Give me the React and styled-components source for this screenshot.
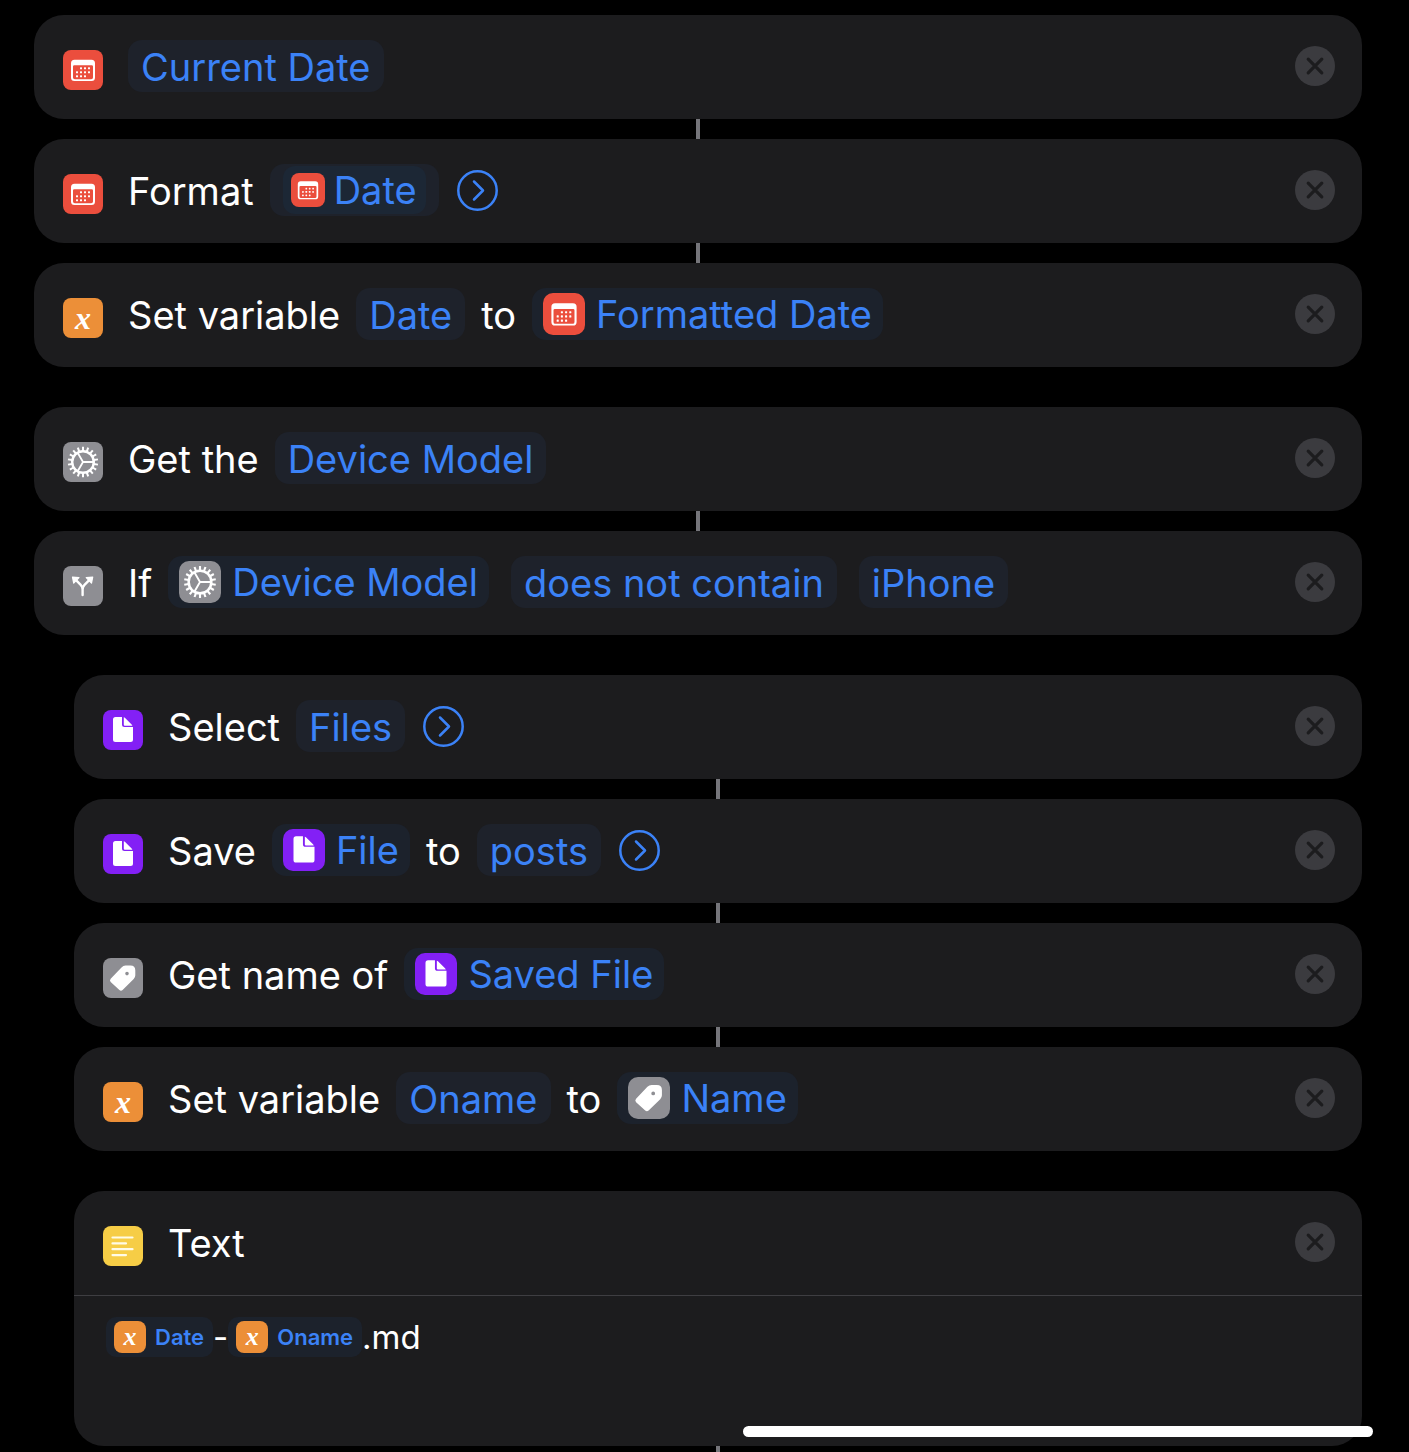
import React from "react";
import styled, { createGlobalStyle } from "styled-components";

const Global = createGlobalStyle`
  *, *::before, *::after { box-sizing: border-box; }
  body { margin: 0; background: #000; }
  button { font: inherit; color: inherit; border: 0; padding: 0; margin: 0; background: none; cursor: pointer; }
`;

const blue = "#3b82f7";
const tint = {
  red: "#eb4e3d",
  orange: "#ec8f38",
  gray: "#8e8e93",
  purple: "#8320f5",
  yellow: "#f6cd46",
};

const Page = styled.main`
  min-height: 100vh;
  display: flex;
  flex-direction: column;
  padding: 15px 47px 0 34px;
  background: #000;
  color: #fff;
  font-family: Inter, "Liberation Sans", sans-serif;
  font-size: 38px;
  font-weight: 420;
  line-height: 50px;
`;

const Group = styled.section`
  display: flex;
  flex-direction: column;
  gap: 20px;
  margin-bottom: ${(p) => (p.$last ? 0 : 40)}px;
  padding-left: ${(p) => (p.$nested ? 40 : 0)}px;
`;

const Card = styled.article`
  position: relative;
  border-radius: 30px;
  background: #1c1c1e;

  & + &::before {
    content: "";
    position: absolute;
    bottom: 100%;
    left: calc(50% - 2px);
    width: 4px;
    height: 20px;
    background: #75757a;
  }
`;

const Header = styled.div`
  display: flex;
  align-items: center;
  gap: 25px;
  min-height: 104px;
  padding: 25px 27px 27px 29px;
`;

const Tail = styled.div`
  flex: 1;
  display: flex;
  justify-content: center;
  padding-left: 40px;

  &::before {
    content: "";
    width: 4px;
    background: #75757a;
  }
`;

const Tile = styled.span`
  flex: none;
  display: flex;
  align-items: center;
  justify-content: center;
  width: ${(p) => p.$size}px;
  height: ${(p) => p.$size}px;
  border-radius: ${(p) => (p.$size > 40 ? 10 : 8)}px;
  background: ${(p) => tint[p.$color]};
  color: #fff;

  svg { display: block; width: 100%; height: 100%; }
`;

const ActionIcon = styled.span`
  display: flex;
  margin-top: 8px;
`;

const VariableMark = styled.span`
  font-family: "Liberation Serif", serif;
  font-style: italic;
  font-weight: 700;
  font-size: ${(p) => (p.$size > 36 ? 32 : 26)}px;
  line-height: 32px;
`;

const Sentence = styled.div`
  flex: 1;
  display: flex;
  align-items: center;
  gap: 16px;
  min-width: 0;
  white-space: nowrap;
`;

const Word = styled.span`
  padding-top: 2px;
`;

const Pill = styled.button`
  display: flex;
  align-items: center;
  height: 52px;
  padding: 2px 13px 0;
  border-radius: 14px;
  background: #1e222b;
  color: ${blue};

  & + & { margin-left: 6px; }
`;

const NestingPill = styled(Pill)`
  padding: 0 13px 1px;
`;

const VariablePill = styled(Pill)`
  gap: 11px;
  padding: 0 11px;
  background: #1c222c;
`;

const InnerPill = styled.span`
  display: flex;
  align-items: center;
  gap: 9px;
  height: 48px;
  padding: 0 9px 0 8px;
  border-radius: 12px;
  background: #1c2735;
`;

const Expand = styled.button`
  width: 41px;
  height: 41px;
  margin-left: 2px;

  svg { display: block; }
`;

const Close = styled.button`
  flex: none;
  width: 40px;
  height: 40px;

  svg { display: block; }
`;

const TextBody = styled.div`
  display: flex;
  align-items: flex-start;
  min-height: 151px;
  padding: 21px 32px;
  border-top: 1px solid #3e3e42;
  font-size: 33px;
  font-weight: 400;
  line-height: 40px;
  outline: none;
`;

const Token = styled.span`
  display: flex;
  align-items: center;
  gap: 9px;
  height: 40px;
  padding: 0 9px 1px 8px;
  border-radius: 10px;
  background: #1c222c;
  color: ${blue};
  font-size: 22px;
  font-weight: 600;
`;

const HomeIndicator = styled.div`
  position: fixed;
  right: 36px;
  bottom: 15px;
  width: 45%;
  max-width: 630px;
  height: 11px;
  border-radius: 6px;
  background: #fff;
`;

const calendarDots = [
  [18, 18], [22, 18], [26, 18],
  [14, 22], [18, 22], [22, 22], [26, 22],
  [14, 26], [18, 26], [22, 26],
];

const glyphs = {
  calendar: (
    <svg viewBox="0 0 40 40" aria-hidden="true">
      <path
        fill="#fff"
        fillRule="evenodd"
        d="M11.5 9.7h17A3.5 3.5 0 0 1 32 13.2v14.3a3.5 3.5 0 0 1-3.5 3.5h-17A3.5 3.5 0 0 1 8 27.5V13.2a3.5 3.5 0 0 1 3.5-3.5zM11.3 15.2a1.3 1.3 0 0 0-1.3 1.3v11a1.8 1.8 0 0 0 1.8 1.8h16.4a1.8 1.8 0 0 0 1.8-1.8v-11a1.3 1.3 0 0 0-1.3-1.3z"
      />
      {calendarDots.map(([x, y]) => (
        <rect key={`${x}-${y}`} x={x - 1} y={y - 0.7} width="2" height="2" rx="0.5" fill="#fff" />
      ))}
    </svg>
  ),
  gear: (
    <svg viewBox="0 0 40 40" aria-hidden="true" fill="none" stroke="#fff">
      <circle cx="20" cy="20" r="10.8" strokeWidth="2.4" />
      <g strokeWidth="2">
        {Array.from({ length: 18 }, (_, i) => (
          <path key={i} d="M31 20L35.200 20" transform={`rotate(${i * 20 + 10} 20 20)`} />
        ))}
      </g>
      <path strokeWidth="1.8" strokeLinejoin="round" d="M20 20H30.5M14.500 10.500L20 20L14.500 29.500" />
    </svg>
  ),
  branch: (
    <svg viewBox="0 0 40 40" aria-hidden="true">
      <path
        d="M19.6 29V23.5Q19.6 20.7 17.7 18.8L13 14.2M19.6 23.5Q19.6 20.7 21.5 18.8L26.2 14.2"
        fill="none"
        stroke="#fff"
        strokeWidth="2.4"
        strokeLinecap="round"
      />
      <path
        d="M9.500 11.200l6.500.300-5.300 5.600zM29.700 11.200l-6.500.300 5.300 5.600z"
        fill="#fff"
        stroke="#fff"
        strokeWidth="1.2"
        strokeLinejoin="round"
      />
    </svg>
  ),
  file: (
    <svg viewBox="0 0 40 40" aria-hidden="true" fill="#fff">
      <path d="M12.5 7H19v7.5a2.5 2.5 0 0 0 2.5 2.5H30v12.500a2.500 2.500 0 0 1-2.500 2.500h-15a2.500 2.500 0 0 1-2.500-2.500v-20A2.500 2.500 0 0 1 12.500 7z" />
      <path d="M20.800 7.300q.700.200 1.300.800l6.500 6.500q.600.600.700 1.200h-7.500a1 1 0 0 1-1-1z" />
    </svg>
  ),
  tag: (
    <svg viewBox="0 0 40 40" aria-hidden="true">
      <path
        fill="#fff"
        fillRule="evenodd"
        d="M7.7 20.7L18.5 9.4Q20.2 7.6 22.5 7.6H27.5Q32.3 7.6 32.3 12.4V17.3Q32.3 19.4 30.7 21.1L19.6 32Q18 33.4 16.4 32L7.7 24Q6.2 22.4 7.7 20.7zM24 13.8a1.8 1.8 0 1 0 0 3.6a1.8 1.8 0 1 0 0-3.6z"
      />
    </svg>
  ),
  lines: (
    <svg viewBox="0 0 40 40" aria-hidden="true" fill="none" stroke="#fffbe6" strokeWidth="2.2" strokeLinecap="round">
      <path d="M9.5 11.5H29.5M9.5 17.4H23M9.5 23.2H29.5M9.5 29.1H23" />
    </svg>
  ),
};

const glyphColor = {
  calendar: "red",
  gear: "gray",
  branch: "gray",
  file: "purple",
  tag: "gray",
  lines: "yellow",
  variable: "orange",
};

function Icon({ name, size = 40 }) {
  return (
    <Tile $size={size} $color={glyphColor[name]}>
      {name === "variable" ? <VariableMark $size={size}>x</VariableMark> : glyphs[name]}
    </Tile>
  );
}

function Variable({ icon, children }) {
  return (
    <VariablePill type="button">
      <Icon name={icon} size={42} />
      {children}
    </VariablePill>
  );
}

function ExpandButton() {
  return (
    <Expand type="button" aria-label="Show more">
      <svg width="41" height="41" viewBox="0 0 41 41" fill="none" stroke={blue} strokeWidth="2.5">
        <circle cx="20.5" cy="20.5" r="19.2" />
        <path d="M17 11.5L26 20.5L17 29.5" strokeLinecap="round" strokeLinejoin="round" />
      </svg>
    </Expand>
  );
}

function Action({ icon, children, body }) {
  return (
    <Card>
      <Header>
        <ActionIcon>
          <Icon name={icon} />
        </ActionIcon>
        <Sentence>{children}</Sentence>
        <Close type="button" aria-label="Remove action">
          <svg width="40" height="40" viewBox="0 0 40 40">
            <circle cx="20" cy="20" r="20" fill="#3b3b3f" />
            <path d="M13.2 13.2L26.8 26.8M26.8 13.2L13.2 26.8" stroke="#1c1c1e" strokeWidth="3.2" strokeLinecap="round" />
          </svg>
        </Close>
      </Header>
      {body}
    </Card>
  );
}

export default function App() {
  return (
    <Page>
      <Global />
      <Group>
        <Action icon="calendar">
          <Pill type="button">Current Date</Pill>
        </Action>
        <Action icon="calendar">
          <Word>Format</Word>
          <NestingPill type="button">
            <InnerPill>
              <Icon name="calendar" size={34} />
              Date
            </InnerPill>
          </NestingPill>
          <ExpandButton />
        </Action>
        <Action icon="variable">
          <Word>Set variable</Word>
          <Pill type="button">Date</Pill>
          <Word>to</Word>
          <Variable icon="calendar">Formatted Date</Variable>
        </Action>
      </Group>

      <Group>
        <Action icon="gear">
          <Word>Get the</Word>
          <Pill type="button">Device Model</Pill>
        </Action>
        <Action icon="branch">
          <Word>If</Word>
          <Variable icon="gear">Device Model</Variable>
          <Pill type="button">does not contain</Pill>
          <Pill type="button">iPhone</Pill>
        </Action>
      </Group>

      <Group $nested>
        <Action icon="file">
          <Word>Select</Word>
          <Pill type="button">Files</Pill>
          <ExpandButton />
        </Action>
        <Action icon="file">
          <Word>Save</Word>
          <Variable icon="file">File</Variable>
          <Word>to</Word>
          <Pill type="button">posts</Pill>
          <ExpandButton />
        </Action>
        <Action icon="tag">
          <Word>Get name of</Word>
          <Variable icon="file">Saved File</Variable>
        </Action>
        <Action icon="variable">
          <Word>Set variable</Word>
          <Pill type="button">Oname</Pill>
          <Word>to</Word>
          <Variable icon="tag">Name</Variable>
        </Action>
      </Group>

      <Group $nested $last>
        <Action
          icon="lines"
          body={
            <TextBody role="textbox" aria-label="Text" tabIndex={0}>
              <Token>
                <Icon name="variable" size={32} />
                Date
              </Token>
              <span>-</span>
              <Token>
                <Icon name="variable" size={32} />
                Oname
              </Token>
              <span>.md</span>
            </TextBody>
          }
        >
          <Word>Text</Word>
        </Action>
      </Group>
      <Tail />
      <HomeIndicator />
    </Page>
  );
}
